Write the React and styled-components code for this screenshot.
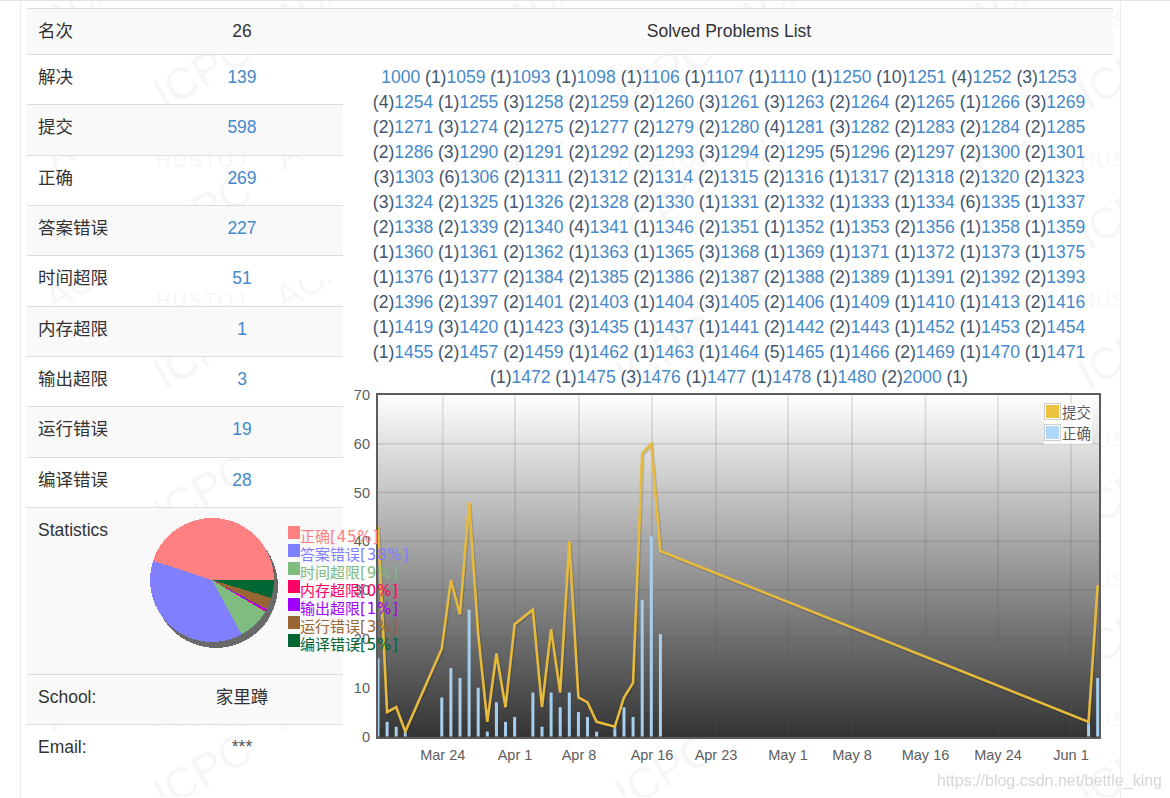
import styled, { createGlobalStyle } from 'styled-components';

const GlobalStyle = createGlobalStyle`
  html, body {
    margin: 0;
    padding: 0;
    background: #fff;
  }
  body {
    border-top: 1px solid #e2e2e2;
    font-family: "Liberation Sans", "Noto Sans CJK SC", sans-serif;
    font-size: 17.5px;
    line-height: 25px;
    color: #333;
    height: 797px;
    overflow: hidden;
  }
`;

const Page = styled.div`
  position: relative;
  box-sizing: border-box;
  margin-left: 20px;
  width: 1101px;
  height: 797px;
  padding: 7px 7px 0 6px;
  border-left: 1px solid #eee;
  border-right: 1px solid #eee;
`;

const Watermark = styled.svg`
  position: absolute;
  left: 0;
  top: -1px;
  width: 100%;
  height: 100%;
  text {
    font-family: "Liberation Sans", sans-serif;
    fill: #f6f6f6;
  }
`;

const CsdnMark = styled.div`
  position: fixed;
  right: 8px;
  top: 768px;
  font-size: 16px;
  color: #d6d6d6;
  text-shadow: 0 0 2px #fff;
`;

const Table = styled.div`
  position: relative;
  border-top: 1px solid #ddd;
`;

const HeaderRow = styled.div`
  display: grid;
  grid-template-columns: 114px 202px 1fr;
  height: 45px;
  background: #f9f9f9;
  border-bottom: 1px solid #ddd;
`;

const Cell = styled.div`
  padding: 10px 11px;
  text-align: ${(p) => (p.$center ? 'center' : 'left')};
`;

const TitleCell = styled(Cell)`
  padding-left: 12px;
  padding-right: 10px;
`;

const Columns = styled.div`
  display: flex;
`;

const LeftColumn = styled.div`
  width: 316px;
  flex: none;
`;

const RightColumn = styled.div`
  flex: 1;
  min-width: 0;
`;

const Row = styled.div`
  position: relative;
  box-sizing: border-box;
  display: grid;
  grid-template-columns: 114px 202px;
  height: ${(p) => p.$height || 50.35}px;
  background: ${(p) => (p.$striped ? '#f9f9f9' : 'transparent')};
  border-top: ${(p) => (p.$first ? 'none' : '1px solid #ddd')};
`;

const StatLink = styled.a`
  color: #4589c9;
  text-decoration: none;
`;

const PieCell = styled.div`
  padding: 8px 8px 0;
`;

const PieSvg = styled.svg`
  display: block;
`;

const PieLegend = styled.div`
  position: absolute;
  z-index: 2;
  left: 261px;
  top: 18px;
  display: flex;
  flex-direction: column;
`;

const LegendRow = styled.div`
  display: flex;
  height: 18px;
  color: ${(p) => p.$color};
  font-size: 15px;
  line-height: 15px;
  white-space: nowrap;
`;

const Swatch = styled.span`
  width: 12px;
  height: 13px;
  flex: none;
  background: ${(p) => p.$color};
`;

const LegendLabel = styled.span`
  margin-top: 3px;
  span {
    font-family: "DejaVu Sans", sans-serif;
    letter-spacing: 0.8px;
  }
`;

const Stars = styled.span`
  color: #555;
`;

const ProblemList = styled.div`
  padding: 10px 9px 0 11px;
  text-align: center;
  color: #44556b;
  a {
    color: #4589c9;
    text-decoration: none;
  }
`;

const ChartSvg = styled.svg`
  display: block;
  position: relative;
  overflow: visible;
  text {
    font-family: "Liberation Sans", "Noto Sans CJK SC", sans-serif;
    font-size: 14.5px;
    fill: #5c5c5c;
  }
`;

const problems = [
  [1000, 1], [1059, 1], [1093, 1], [1098, 1], [1106, 1], [1107, 1], [1110, 1], [1250, 10], [1251, 4], [1252, 3], [1253, 4],
  [1254, 1], [1255, 3], [1258, 2], [1259, 2], [1260, 3], [1261, 3], [1263, 2], [1264, 2], [1265, 1], [1266, 3], [1269, 2],
  [1271, 3], [1274, 2], [1275, 2], [1277, 2], [1279, 2], [1280, 4], [1281, 3], [1282, 2], [1283, 2], [1284, 2], [1285, 2],
  [1286, 3], [1290, 2], [1291, 2], [1292, 2], [1293, 3], [1294, 2], [1295, 5], [1296, 2], [1297, 2], [1300, 2], [1301, 3],
  [1303, 6], [1306, 2], [1311, 2], [1312, 2], [1314, 2], [1315, 2], [1316, 1], [1317, 2], [1318, 2], [1320, 2], [1323, 3],
  [1324, 2], [1325, 1], [1326, 2], [1328, 2], [1330, 1], [1331, 2], [1332, 1], [1333, 1], [1334, 6], [1335, 1], [1337, 2],
  [1338, 2], [1339, 2], [1340, 4], [1341, 1], [1346, 2], [1351, 1], [1352, 1], [1353, 2], [1356, 1], [1358, 1], [1359, 1],
  [1360, 1], [1361, 2], [1362, 1], [1363, 1], [1365, 3], [1368, 1], [1369, 1], [1371, 1], [1372, 1], [1373, 1], [1375, 1],
  [1376, 1], [1377, 2], [1384, 2], [1385, 2], [1386, 2], [1387, 2], [1388, 2], [1389, 1], [1391, 2], [1392, 2], [1393, 2],
  [1396, 2], [1397, 2], [1401, 2], [1403, 1], [1404, 3], [1405, 2], [1406, 1], [1409, 1], [1410, 1], [1413, 2], [1416, 1],
  [1419, 3], [1420, 1], [1423, 3], [1435, 1], [1437, 1], [1441, 2], [1442, 2], [1443, 1], [1452, 1], [1453, 2], [1454, 1],
  [1455, 2], [1457, 2], [1459, 1], [1462, 1], [1463, 1], [1464, 5], [1465, 1], [1466, 2], [1469, 1], [1470, 1], [1471, 1],
  [1472, 1], [1475, 3], [1476, 1], [1477, 1], [1478, 1], [1480, 2], [2000, 1],
];

const stats = [
  ['解决', 139],
  ['提交', 598],
  ['正确', 269],
  ['答案错误', 227],
  ['时间超限', 51],
  ['内存超限', 1],
  ['输出超限', 3],
  ['运行错误', 19],
  ['编译错误', 28],
];

const pieSlices = [
  { label: '正确', pct: '45%', value: 269, color: '#ff8080' },
  { label: '答案错误', pct: '38%', value: 227, color: '#8080ff' },
  { label: '时间超限', pct: '9%', value: 51, color: '#80bb80' },
  { label: '内存超限', pct: '0%', value: 1, color: '#ff0066' },
  { label: '输出超限', pct: '1%', value: 3, color: '#a000ff' },
  { label: '运行错误', pct: '3%', value: 19, color: '#996633' },
  { label: '编译错误', pct: '5%', value: 28, color: '#006633' },
];

// [day index, submissions, accepted]
const chartData = [
  [0, 43, 16], [1, 5, 3], [2, 6, 2], [3, 1, 1], [7, 18, 8], [8, 32, 14], [9, 25, 12], [10, 48, 26],
  [11, 21, 10], [12, 3, 1], [13, 17, 7], [14, 6, 3], [15, 23, 4], [17, 26, 9], [18, 6, 2], [19, 22, 9],
  [20, 9, 6], [21, 40, 9], [22, 8, 5], [23, 7, 4], [24, 3, 1], [26, 2, 2], [27, 8, 6], [28, 11, 4],
  [29, 58, 28], [30, 60, 41], [31, 38, 21], [78, 3, 3], [79, 31, 12],
];

const xTicks = [
  ['Mar 24', 442.7], ['Apr 1', 515], ['Apr 8', 579], ['Apr 16', 652], ['Apr 23', 716],
  ['May 1', 788], ['May 8', 852], ['May 16', 925.5], ['May 24', 998], ['Jun 1', 1071],
];

const px = (i) => 378 + 9.11 * i;
const py = (v) => 735.5 - 4.88 * v;

const PieChart = () => {
  const total = pieSlices.reduce((sum, s) => sum + s.value, 0);
  const cx = 63;
  const cy = 64;
  const r = 62;
  let angle = 0;
  const paths = pieSlices.map((s) => {
    const next = angle + (s.value / total) * Math.PI * 2;
    const x1 = cx + r * Math.cos(angle);
    const y1 = cy - r * Math.sin(angle);
    const x2 = cx + r * Math.cos(next);
    const y2 = cy - r * Math.sin(next);
    const large = next - angle > Math.PI ? 1 : 0;
    angle = next;
    return (
      <path
        key={s.label}
        d={`M${cx} ${cy}L${x1} ${y1}A${r} ${r} 0 ${large} 0 ${x2} ${y2}Z`}
        fill={s.color}
      />
    );
  });
  return (
    <PieSvg width="135" height="140" viewBox="0 0 135 140" shapeRendering="crispEdges">
      <circle cx={cx + 4} cy={cy + 6} r={r} fill="#6a6a6a" />
      {paths}
    </PieSvg>
  );
};

const TrendChart = () => {
  const line = chartData.map(([i, v]) => `${px(i)},${py(v)}`).join(' ');
  return (
    <ChartSvg width="770" height="380" viewBox="343 389 770 380">
      <defs>
        <linearGradient id="plotBg" x1="0" y1="0" x2="0" y2="1">
          <stop offset="0" stopColor="#fff" />
          <stop offset="1" stopColor="#333" />
        </linearGradient>
      </defs>
      <rect x="377" y="393" width="723" height="344" fill="url(#plotBg)" />
      {[10, 20, 30, 40, 50, 60].map((v) => (
        <line key={v} x1="377" x2="1100" y1={py(v)} y2={py(v)} stroke="#545454" strokeOpacity="0.18" strokeWidth="1.5" />
      ))}
      {xTicks.map(([label, x]) => (
        <line key={label} x1={x} x2={x} y1="393" y2="737" stroke="#545454" strokeOpacity="0.14" strokeWidth="2" />
      ))}
      {chartData.map(([i, , ok]) => (
        <rect key={i} x={px(i) - 1.5} y={py(ok)} width="3" height={735.5 - py(ok)} fill="#a6cfee" />
      ))}
      <polyline points={line} transform="translate(1 1.5)" fill="none" stroke="#000" strokeOpacity="0.15" strokeWidth="3" />
      <polyline points={line} fill="none" stroke="#e6ba3c" strokeWidth="2.6" strokeLinejoin="miter" />
      <rect x="377" y="393" width="723" height="344" fill="none" stroke="#5c5c5c" strokeWidth="2" />
      {[0, 10, 20, 30, 40, 50, 60, 70].map((v) => (
        <text key={v} x="370" y={py(v) + 5} textAnchor="end">{v}</text>
      ))}
      {xTicks.map(([label, x]) => (
        <text key={label} x={x} y="759" textAnchor="middle">{label}</text>
      ))}
      <rect x="1044" y="402" width="48" height="41" fill="#fff" fillOpacity="0.85" />
      <rect x="1044.5" y="402.5" width="16" height="16" fill="#fff" stroke="#ccc" />
      <rect x="1046" y="404" width="13" height="13" fill="#edc240" />
      <rect x="1044.5" y="423.5" width="16" height="16" fill="#fff" stroke="#ccc" />
      <rect x="1046" y="425" width="13" height="13" fill="#afd8f8" />
      <text x="1062" y="417">提交</text>
      <text x="1062" y="438">正确</text>
    </ChartSvg>
  );
};

const App = () => {
  return (
    <>
      <GlobalStyle />
      <Page>
        <Watermark>
          <defs>
            <pattern id="marks" width="462" height="140" patternUnits="userSpaceOnUse">
              <text x="130" y="90" fontSize="44" transform="rotate(-30 175 75)">ICPC</text>
              <text x="135" y="27" fontSize="20" letterSpacing="2">HUSTOJ</text>
              <text x="25" y="20" fontSize="36" transform="rotate(-30 50 10)">ACM</text>
              <text x="255" y="20" fontSize="36" transform="rotate(-30 280 10)">ACM</text>
            </pattern>
          </defs>
          <rect width="100%" height="100%" fill="url(#marks)" />
        </Watermark>
        <Table>
          <HeaderRow>
            <Cell>名次</Cell>
            <Cell $center>26</Cell>
            <TitleCell $center>Solved Problems List</TitleCell>
          </HeaderRow>
          <Columns>
            <LeftColumn>
              {stats.map(([label, value], i) => (
                <Row key={label} $striped={i % 2 === 1} $first={i === 0} $height={i === 0 ? 49.35 : undefined}>
                  <Cell>{label}</Cell>
                  <Cell $center>
                    <StatLink href="#">{value}</StatLink>
                  </Cell>
                </Row>
              ))}
              <Row $striped $height={167.3}>
                <Cell>Statistics</Cell>
                <PieCell>
                  <PieChart />
                </PieCell>
                <PieLegend>
                  {pieSlices.map((s) => (
                    <LegendRow key={s.label} $color={s.color}>
                      <Swatch $color={s.color} />
                      <LegendLabel>
                        {s.label}
                        <span>[{s.pct}]</span>
                      </LegendLabel>
                    </LegendRow>
                  ))}
                </PieLegend>
              </Row>
              <Row $striped $height={50}>
                <Cell>School:</Cell>
                <Cell $center>家里蹲</Cell>
              </Row>
              <Row $height={50}>
                <Cell>Email:</Cell>
                <Cell $center>
                  <Stars>***</Stars>
                </Cell>
              </Row>
            </LeftColumn>
            <RightColumn>
              <ProblemList>
                {problems.map(([id, count]) => (
                  <span key={id}>
                    <a href="#">{id}</a> ({count})
                  </span>
                ))}
              </ProblemList>
              <TrendChart />
            </RightColumn>
          </Columns>
        </Table>
        <CsdnMark>https://blog.csdn.net/bettle_king</CsdnMark>
      </Page>
    </>
  );
};

export default App;
